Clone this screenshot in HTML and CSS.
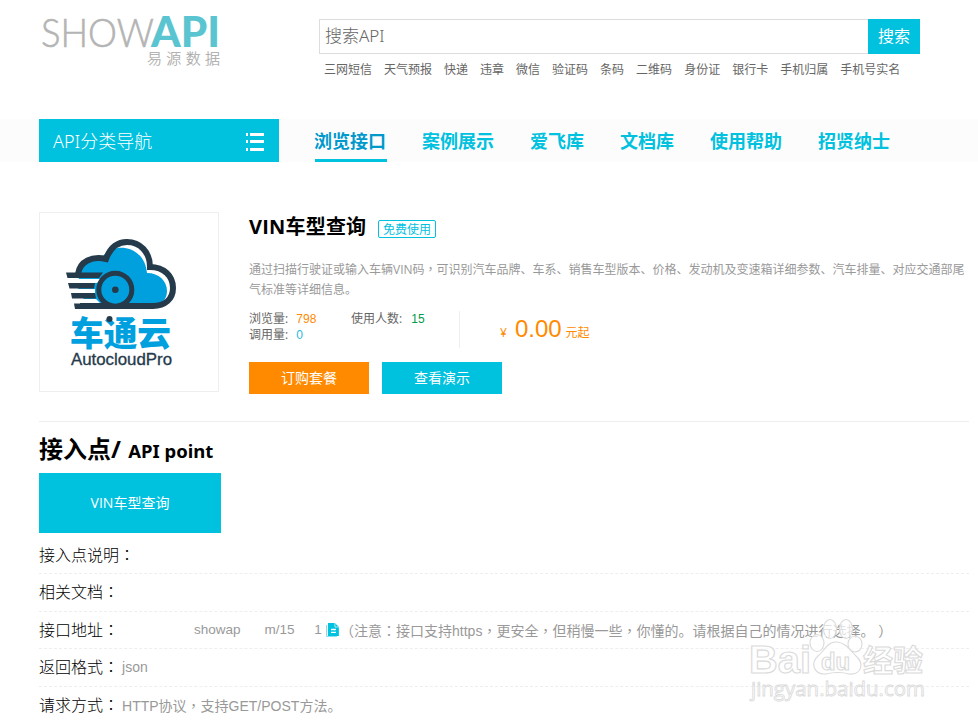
FILE: index.html
```html
<!DOCTYPE html>
<html lang="zh-CN">
<head>
    <meta charset="utf-8">
    <title>VIN车型查询</title>
    <link rel="stylesheet" href="styles.css">
</head>
<body>
<div class="header">
    <svg class="logo" width="184" height="56" viewBox="0 0 184 56">
        <text class="logo-show" x="1" y="34" textLength="113" lengthAdjust="spacingAndGlyphs">SHOW</text>
        <text class="logo-api" x="111" y="34" textLength="69" lengthAdjust="spacingAndGlyphs">API</text>
        <text class="logo-cn" x="107" y="51" textLength="73">易源数据</text>
    </svg>
    <div class="search">
        <div class="search-box">
            <div class="search-input">搜索API</div>
            <div class="search-btn">搜索</div>
        </div>
        <div class="hot-words">
            <a>三网短信</a><a>天气预报</a><a>快递</a><a>违章</a><a>微信</a><a>验证码</a><a>条码</a><a>二维码</a><a>身份证</a><a>银行卡</a><a>手机归属</a><a>手机号实名</a>
        </div>
    </div>
</div>

<div class="nav">
    <div class="nav-category">
        <span>API分类导航</span>
        <svg width="18" height="18" viewBox="0 0 18 18" fill="#fff">
            <path d="M0 0h2v3H0zM4 0h14v3H4zM0 7h2v3H0zM4 7h14v3H4zM0 15h2v3H0zM4 15h14v3H4z"/>
        </svg>
    </div>
    <div class="nav-tabs">
        <a class="active">浏览接口</a>
        <a>案例展示</a>
        <a>爱飞库</a>
        <a>文档库</a>
        <a>使用帮助</a>
        <a>招贤纳士</a>
    </div>
</div>

<div class="product">
    <div class="product-img">
        <svg width="178" height="178" viewBox="0 0 178 178">
            <!-- cloud -->
            <path d="M39 60C41 50 51 46 60 48C64 38 75 34 85 35C98 37 106 47 107 60C119 60 127 68 127 78C127 87 121 92 112 92H50L38 80Z" fill="#00a0df"/>
            <path d="M38 61C40 48 52 43 66 46C70 35 77 29 87 29C100 29 110 39 110 54C124 54 133 63 133 75C133 86 125 93 113 93H40" fill="none" stroke="#253a4b" stroke-width="6"/>
            <!-- speed lines -->
            <path d="M27 66H62L57 70H29ZM30 76H55V80H31ZM33 86H56L60 90H34Z" fill="#fff"/>
            <path d="M26 59.500H63L59 65H27.500ZM28 70H55L54 75.500H29.500ZM31 80H55L56 85.500H32ZM34 90.500H80V96H35Z" fill="#253a4b"/>
            <!-- wheel -->
            <circle cx="75.300" cy="76.700" r="16.500" fill="#00a0df" stroke="#253a4b" stroke-width="5"/>
            <circle cx="75.300" cy="76.700" r="3.300" fill="#253a4b"/>
            <text class="car-cn" x="30" y="133" textLength="101" lengthAdjust="spacingAndGlyphs">车通云</text>
            <circle cx="69.500" cy="106" r="3" fill="#253a4b"/>
            <text class="car-en" x="31" y="152" textLength="101" lengthAdjust="spacingAndGlyphs">AutocloudPro</text>
        </svg>
    </div>
    <div class="product-info">
        <div class="title-row">
            <h1>VIN车型查询</h1>
            <span class="free">免费使用</span>
        </div>
        <p class="desc">通过扫描行驶证或输入车辆VIN码<i>，</i>可识别汽车品牌、车系、销售车型版本、价格、发动机及变速箱详细参数、汽车排量、对应交通部尾<br>气标准等详细信息。</p>
        <div class="stats">
            <div class="views">
                <div>浏览量: <b class="orange">798</b></div>
                <div>调用量: <b class="blue">0</b></div>
            </div>
            <div class="users">使用人数: <b class="green">15</b></div>
            <div class="price"><small>¥</small><strong>0.00</strong><span>元起</span></div>
        </div>
        <div class="buttons">
            <a class="btn-buy">订购套餐</a>
            <a class="btn-demo">查看演示</a>
        </div>
    </div>
</div>

<div class="point">
    <h2>接入点/ <small>API point</small></h2>
    <div class="point-btn">VIN车型查询</div>
    <div class="row"><label>接入点说明<i>：</i></label></div>
    <div class="row"><label>相关文档<i>：</i></label></div>
    <div class="row">
        <label>接口地址<i>：</i></label>
        <div class="url">
            <span class="url-host">showap</span>
            <span class="url-path">m/15</span>
            <span class="url-end">1</span>
            <svg width="14" height="16" viewBox="0 0 14 16">
                <path d="M.5 3v11.500H11" fill="none" stroke="#7edff0"/>
                <path d="M2 1h7l4 4v9H2z" fill="#00c1de"/>
                <path d="M9 1v4h4" fill="none" stroke="#aeeaf4"/>
                <path d="M5 7.500h5M5 10.500h5" fill="none" stroke="#fff" stroke-width="1.300"/>
            </svg>
        </div>
        <span class="value">（注意<i>：</i>接口支持https<i>，</i>更安全<i>，</i>但稍慢一些<i>，</i>你懂的。请根据自己的情况进行选择。 ）</span>
    </div>
    <div class="row"><label>返回格式<i>：</i></label><span class="value">json</span></div>
    <div class="row"><label>请求方式<i>：</i></label><span class="value">HTTP协议<i>，</i>支持GET/POST方法。</span></div>
</div>

<svg class="watermark" width="184" height="92" viewBox="0 0 184 92">
    <g class="paw">
        <ellipse cx="73" cy="27" rx="7" ry="8.500"/>
        <ellipse cx="86" cy="13" rx="6.500" ry="9.500"/>
        <ellipse cx="102" cy="13" rx="6.500" ry="9.500"/>
        <ellipse cx="111" cy="28" rx="7" ry="8"/>
        <path d="M93 26C84 25 80 35 74 40C66 47 70 59 82 58C89 56 99 56 105 58C117 59 121 48 112 40C106 34 102 27 93 26Z"/>
    </g>
    <text class="wm-big" x="5" y="57" textLength="62" lengthAdjust="spacingAndGlyphs">Bai</text>
    <text class="wm-du" x="77" y="54" textLength="29" lengthAdjust="spacingAndGlyphs">du</text>
    <text class="wm-big wm-cn" x="119" y="55" textLength="60" lengthAdjust="spacingAndGlyphs">经验</text>
    <text class="wm-url" x="7" y="80" textLength="174" lengthAdjust="spacingAndGlyphs">jingyan.baidu.com</text>
</svg>
</body>
</html>
```
FILE: styles.css
```css
body {
    margin: 0;
    height: 723px;
    overflow: hidden;
    position: relative;
    background: #fff;
    font-family: "Open Sans", "Noto Sans CJK SC", sans-serif;
    font-size: 12px;
    color: #666;
}

/* centred punctuation */
i {
    font-style: normal;
    font-family: "Noto Sans CJK TC", sans-serif;
    font-feature-settings: "locl" 0;
}

b {
    font-weight: normal;
    font-family: "Liberation Sans", sans-serif;
}

.header {
    display: flex;
    height: 119px;
    padding-left: 40px;
}

.logo {
    margin-top: 13px;
    flex: none;
    overflow: visible;
}

.logo-show {
    font: 300 39px Lato, sans-serif;
    fill: #b4b4b4;
    stroke: #b4b4b4;
    stroke-width: 0.6;
}

.logo-api {
    font: 900 42px Lato, sans-serif;
    fill: #5bc4d1;
}

.logo-cn {
    font: 300 15px "Noto Sans CJK SC", sans-serif;
    fill: #aaa;
    stroke: #aaa;
    stroke-width: 0.2;
}

.search {
    margin: 19px 0 0 95px;
    width: 601px;
}

.search-box {
    display: flex;
    height: 35px;
}

.search-input {
    flex: 1;
    box-sizing: border-box;
    border: 1px solid #ddd;
    border-right: none;
    padding-left: 5px;
    font-family: "Noto Sans", "Noto Sans CJK SC", sans-serif;
    font-size: 17px;
    line-height: 32px;
    font-weight: 300;
}

.search-btn {
    width: 52px;
    background: #00c1de;
    color: #fff;
    font-size: 16px;
    line-height: 34px;
    text-align: center;
}

.hot-words {
    display: flex;
    gap: 12px;
    padding-left: 5px;
    line-height: 32px;
    white-space: nowrap;
}

.nav {
    display: flex;
    height: 43px;
    padding-left: 39px;
    background: #fcfcfc;
}

.nav-category {
    display: flex;
    align-items: center;
    justify-content: space-between;
    width: 211px;
    padding: 0 15px 0 14px;
    background: #00c1de;
    color: #fff;
    font-family: "Noto Sans", "Noto Sans CJK SC", sans-serif;
    font-size: 18px;
    font-weight: 300;
}

.nav-category span {
    margin-top: -2px;
}

.nav-category svg {
    margin-top: 3px;
}

.nav-tabs {
    display: flex;
    gap: 36px;
    margin-left: 36px;
    font-size: 18px;
    font-weight: bold;
    line-height: 45px;
    color: #00c1de;
}

.nav-tabs a {
    box-sizing: border-box;
    height: 43px;
    text-indent: -1px;
    width: 72px;
}

.nav-tabs a:nth-child(3),
.nav-tabs a:nth-child(4) {
    width: 54px;
}

.nav-tabs .active {
    color: #0099cc;
    border-bottom: 3px solid #00c1de;
}

.product {
    display: flex;
    width: 930px;
    height: 209px;
    margin: 50px 0 0 39px;
    border-bottom: 1px solid #eee;
}

.product-img {
    width: 178px;
    height: 178px;
    border: 1px solid #eee;
}

.car-cn {
    font: 900 34px "Noto Sans CJK SC", sans-serif;
    fill: #00a0df;
}

.car-en {
    font: 16px "Liberation Sans", sans-serif;
    fill: #253a4b;
    stroke: #253a4b;
    stroke-width: 0.3;
}

.product-info {
    margin-left: 30px;
    white-space: nowrap;
}

.title-row {
    display: flex;
    align-items: center;
    height: 30px;
}

h1 {
    margin: 0 12px 0 0;
    width: 117px;
    font-size: 20px;
    line-height: 30px;
    letter-spacing: 0.2px;
    color: #000;
}

.free {
    margin-top: 4px;
    width: 56px;
    height: 16px;
    border: 1px solid #00c1de;
    border-radius: 2px;
    color: #00c1de;
    line-height: 17px;
    text-align: center;
}

.desc {
    margin: 17px 0 0;
    line-height: 20px;
    color: #999;
}

.stats {
    display: flex;
    height: 37px;
    margin-top: 11px;
    line-height: 16px;
}

.stats b {
    margin-left: 5px;
}

.views {
    width: 102px;
}

.users {
    width: 108px;
    border-right: 1px solid #eee;
}

.orange {
    color: #ff8a00;
}

.blue {
    color: #2db7dc;
}

.green {
    color: #009c4a;
}

.stats .green {
    margin-left: 6px;
}

.price {
    padding-left: 40px;
    color: #ff8a00;
    line-height: 44px;
}

.price small {
    font-size: 12px;
}

.price strong {
    margin: 0 4px 0 8px;
    font: 24px "Liberation Sans", sans-serif;
}

.buttons {
    display: flex;
    gap: 13px;
    margin-top: 14px;
}

.buttons a {
    width: 120px;
    height: 32px;
    color: #fff;
    font-size: 14px;
    line-height: 32px;
    text-align: center;
}

.btn-buy {
    background: #ff8a00;
}

.btn-demo {
    background: #00c1de;
}

.point {
    width: 930px;
    margin-left: 39px;
}

h2 {
    margin: 0;
    height: 51px;
    line-height: 53px;
    font-size: 24px;
    color: #000;
}

h2 small {
    font-family: "Noto Sans", sans-serif;
    font-size: 18.5px;
    margin-left: 1px;
}

.point-btn {
    width: 182px;
    height: 60px;
    margin-bottom: 4px;
    background: #00c1de;
    color: #fff;
    font-size: 14px;
    line-height: 60px;
    text-align: center;
}

.row {
    display: flex;
    box-sizing: border-box;
    height: 37.4px;
    border-bottom: 1px dashed #eee;
    line-height: 37px;
    white-space: nowrap;
}

.row:last-child {
    border: none;
}

.row label {
    font-size: 16px;
    font-weight: 300;
    line-height: 35px;
    color: #000;
    margin-right: 3px;
}

.value,
.url {
    font-family: "Liberation Sans", "Noto Sans CJK SC", sans-serif;
    font-size: 14px;
    line-height: 36px;
    color: #999;
}

.url {
    display: flex;
    align-items: center;
    width: 218px;
    font-size: 13.5px;
}

.url span {
    overflow: hidden;
}

.url-host {
    width: 48px;
    margin-left: 72px;
}

.url-path {
    width: 31px;
    margin-left: 23px;
}

.url-end {
    width: 8px;
    margin: 0 4px 0 19px;
}

/* watermark lies over the last rows */
.watermark {
    position: absolute;
    left: 744px;
    top: 616px;
}

.paw,
.watermark text {
    fill: rgba(255, 255, 255, 0.7);
    stroke: #dadada;
    stroke-width: 1.1;
}

.wm-big {
    font: bold 39px "Liberation Sans", sans-serif;
}

.wm-cn {
    font: bold 30px "Noto Sans CJK SC", sans-serif;
}

.wm-du {
    font: bold 24px "Liberation Sans", sans-serif;
}

.watermark .wm-url {
    font: 20px "Open Sans", sans-serif;
    stroke-width: 0.8;
}
```
